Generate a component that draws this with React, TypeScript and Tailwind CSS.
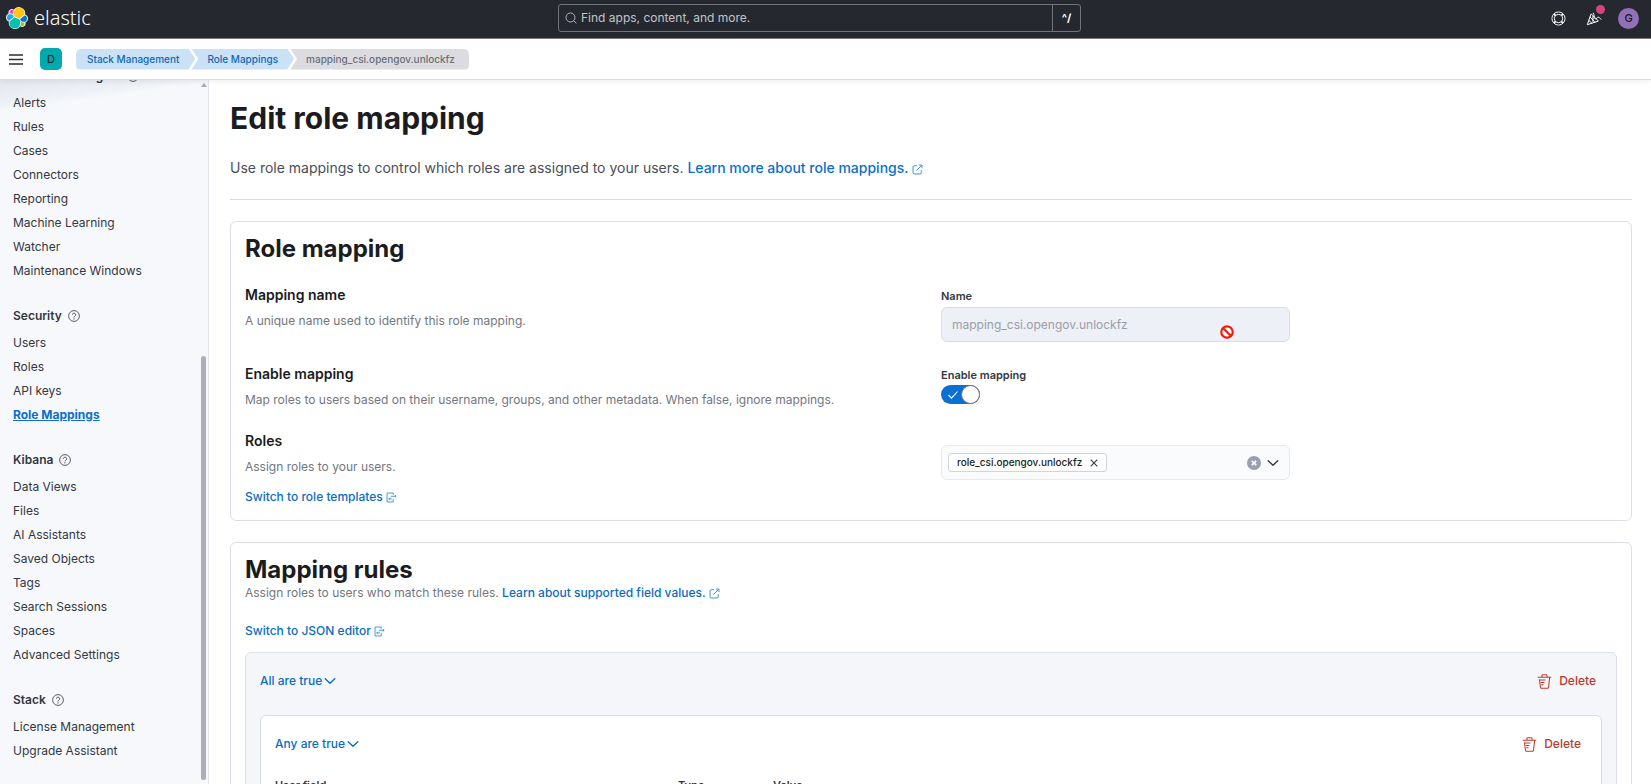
import { useState, type ReactNode } from "react";

const navSections = [
  {
    title: "Alerts and Insights",
    items: ["Alerts", "Rules", "Cases", "Connectors", "Reporting", "Machine Learning", "Watcher", "Maintenance Windows"],
  },
  { title: "Security", items: ["Users", "Roles", "API keys", "Role Mappings"] },
  {
    title: "Kibana",
    items: ["Data Views", "Files", "AI Assistants", "Saved Objects", "Tags", "Search Sessions", "Spaces", "Advanced Settings"],
  },
  { title: "Stack", items: ["License Management", "Upgrade Assistant"] },
];

function ElasticLogo() {
  return (
    <svg viewBox="0 0 32 32" className="size-[22px]" aria-hidden="true">
      <path fill="#fff" d="M32 16.77c0-2.68-1.66-5.03-4.16-5.95A9.2 9.2 0 0 0 11.3 4.05a4.87 4.87 0 0 0-7.5 5.34A6.36 6.36 0 0 0 0 15.3c0 2.7 1.68 5.05 4.19 5.96a9.18 9.18 0 0 0 16.5 6.78 4.87 4.87 0 0 0 7.51-5.35A6.38 6.38 0 0 0 32 16.77" />
      <path fill="#FEC514" d="m12.58 13.79 7 3.2 7.07-6.2a7.9 7.9 0 0 0-14.43-5.96l-1.18 6.1z" />
      <path fill="#00BFB3" d="M5.33 21.22a7.9 7.9 0 0 0 14.46 5.97l1.17-6.09-1.56-2.98-7.03-3.2z" />
      <path fill="#F04E98" d="m5.29 9.08 4.8 1.14 1.05-5.46a3.79 3.79 0 0 0-5.85 4.32" />
      <path fill="#1BA9F5" d="M4.87 10.22a5.3 5.3 0 0 0-.22 9.95l6.73-6.08-1.23-2.64z" />
      <path fill="#93C90E" d="M20.87 27.18a3.78 3.78 0 0 0 5.84-4.31l-4.8-1.12z" />
      <path fill="#07C" d="m21.85 20.62 5.28 1.24a5.3 5.3 0 0 0 .22-9.95l-6.91 6.06z" />
    </svg>
  );
}

function HelpIcon() {
  return (
    <svg viewBox="0 0 16 16" className="size-3" fill="none" stroke="#4a4e59" aria-hidden="true">
      <circle cx="8" cy="8" r="7.2" strokeWidth="1.2" />
      <path strokeWidth="1.3" d="M5.8 6.3a2.2 2.2 0 1 1 3.3 2c-.7.4-1.1.8-1.1 1.6" />
      <circle cx="8" cy="11.9" r=".5" fill="#4a4e59" strokeWidth=".6" />
    </svg>
  );
}

function LifebuoyIcon() {
  return (
    <svg viewBox="0 0 16 16" className="size-[15px]" fill="none" stroke="#fff" strokeWidth="1" aria-hidden="true">
      <circle cx="8" cy="8" r="7" />
      <circle cx="8" cy="8" r="4.4" />
      <path strokeWidth="1.9" d="m3.1 3.1 1.8 1.8M12.9 3.1l-1.8 1.8M3.1 12.9l1.8-1.8M12.9 12.9l-1.8-1.8" />
    </svg>
  );
}

function CheerIcon() {
  return (
    <svg viewBox="0 0 16 16" className="size-4" fill="none" stroke="#fff" strokeWidth="1" strokeLinecap="round" strokeLinejoin="round" aria-hidden="true">
      <path d="M5 4.2 1.3 14.7 12 11.2zM4.1 7l4.8 5.2M2.8 10.4l3.1 2.8M6.9 6.4v5M8 8.6c.3-2 .3-3.4-.7-5.4M10 9.2c.8-1.7 2-2.4 3.2-1.8.9.5 1 1.5 1.7 2" />
    </svg>
  );
}

function PopoutIcon() {
  return (
    <svg viewBox="0 0 16 16" className="inline size-[11px]" fill="none" stroke="#3b8fd9" strokeWidth="1.4" aria-hidden="true">
      <path d="M7 2.5H3.2a1.7 1.7 0 0 0-1.7 1.7v8.6a1.7 1.7 0 0 0 1.7 1.7h8.6a1.7 1.7 0 0 0 1.7-1.7V9M10 1.5h4.5V6M14.3 1.7 6.5 9.5" />
    </svg>
  );
}

function SwapIcon() {
  return (
    <svg viewBox="0 0 16 16" className="size-[11px]" fill="none" stroke="#2a83d3" strokeWidth="1.2" aria-hidden="true">
      <path d="M10.5 4V1.5h-9v13h9V10" />
      <path d="M7 6.2h7.5M12.9 4.4l1.9 1.8-1.9 1.8" />
      <path d="M8.600 10H4M5.800 8.200 4 10l1.800 1.800" />
    </svg>
  );
}

function ChevronIcon() {
  return (
    <svg viewBox="0 0 12 12" className="size-3" fill="none" stroke="currentColor" strokeWidth="1.4" strokeLinecap="round" strokeLinejoin="round" aria-hidden="true">
      <path d="m1.2 3.8 4.8 4.5 4.8-4.5" />
    </svg>
  );
}

function TrashIcon() {
  return (
    <svg viewBox="0 0 16 16" className="size-[15px]" fill="none" stroke="currentColor" strokeWidth="1.1" aria-hidden="true">
      <path d="M.8 3.5h14.4M5.3 3.3V1.6c0-.5.3-.8.8-.8h3.8c.5 0 .8.3.8.8v1.7M2.5 5.6l1.2 8.7c.1.5.4.9 1 .9h6.600c.6 0 .9-.4 1-.9l1.2-10.7M3 6.5h6M4 9h4M4.5 11.5H7" />
    </svg>
  );
}

function DeleteButton() {
  return (
    <button type="button" className="flex h-7 items-center gap-[7px] px-1.5 text-[12px] font-medium text-[#bd3a2b]">
      <TrashIcon />
      Delete
    </button>
  );
}

function GroupHeader({ label }: { label: string }) {
  return (
    <div className="flex items-center justify-between">
      <button type="button" className="flex h-7 items-center gap-0.5 text-[12px] font-medium text-[#0b6cbd]">
        {label}
        <ChevronIcon />
      </button>
      <DeleteButton />
    </div>
  );
}

function SwitchLink({ children }: { children: ReactNode }) {
  return (
    <a href="#switch" className="flex w-fit items-center gap-[3px] text-[12px] leading-[18px] font-medium text-[#0b6cbd]">
      {children}
      <SwapIcon />
    </a>
  );
}

function FormRow({ title, description, extra, children }: { title: string; description: string; extra?: ReactNode; children: ReactNode }) {
  return (
    <div className="grid grid-cols-2 gap-5">
      <div>
        <h3 className="text-[14px] leading-[22px] font-semibold text-[#1a1c21]">{title}</h3>
        <p className="mt-1.5 text-[12px] leading-[18px] text-[#73767f]">{description}</p>
        {extra && <div className="mt-3">{extra}</div>}
      </div>
      <div>{children}</div>
    </div>
  );
}

function Sidebar() {
  return (
    <aside className="flex w-[209px] shrink-0 overflow-hidden border-r border-[#e3e5ea] bg-[#f6f8fc] bg-[linear-gradient(172deg,#e3e7ee_0px,#eef1f6_24px,#f6f8fc_32px)]">
      <nav aria-label="Management" className="-mt-4 flex-1 pl-[13px]">
        {navSections.map((section) => (
          <section key={section.title} className="mb-[21px]">
            <h2 className="mb-[3px] flex h-6 items-center gap-1.5 text-[12px] font-semibold text-[#343741]">
              {section.title}
              <HelpIcon />
            </h2>
            <ul>
              {section.items.map((item) => (
                <li key={item} className="h-6 text-[12px] leading-6">
                  <a
                    href="#nav"
                    className={item === "Role Mappings" ? "font-bold text-[#0b6fc9] underline" : "text-[#343741]"}
                  >
                    {item}
                  </a>
                </li>
              ))}
            </ul>
          </section>
        ))}
      </nav>
      <div className="flex w-2 flex-col items-start pt-[3px] pb-1 pl-px" aria-hidden="true">
        <svg viewBox="0 0 6 4" className="h-1 w-1.5" fill="#a5a8b0">
          <path d="M3 0 6 4H0z" />
        </svg>
        <div className="flex-[269]" />
        <div className="w-[5px] flex-[424] rounded-full bg-[#acaeb9]" />
      </div>
    </aside>
  );
}

function Header() {
  return (
    <header className="shrink-0">
      <div className="grid h-[39px] grid-cols-[1fr_auto_1fr] items-center border-b border-[#7d7880] bg-[#25282f] pr-3 pb-0.5">
        <a href="#home" className="flex items-center gap-1.5 pl-1.5">
          <ElasticLogo />
          <span className="font-['Noto_Sans'] text-[20px] leading-6 font-light text-white">elastic</span>
        </a>
        <div className="flex h-7 w-[523px] items-center rounded-[3px] border border-[#70737a]">
          <svg viewBox="0 0 16 16" className="ml-1.5 size-3" fill="none" stroke="#b4b7bd" strokeWidth="1.3" aria-hidden="true">
            <circle cx="7.3" cy="7.3" r="6" />
            <path d="m11.6 11.6 3.6 3.6" />
          </svg>
          <input
            type="search"
            aria-label="Find apps, content, and more."
            placeholder="Find apps, content, and more."
            className="min-w-0 flex-1 bg-transparent px-1 text-[12px] text-white outline-none placeholder:text-[#c2c4ca]"
          />
          <kbd className="flex h-full w-7 items-center justify-center border-l border-[#70737a] font-['Inter'] text-[11px] font-bold text-white">^/</kbd>
        </div>
        <div className="flex items-center justify-end">
          <button type="button" aria-label="Help" className="mr-5">
            <LifebuoyIcon />
          </button>
          <button type="button" aria-label="What's new" className="relative mr-4">
            <CheerIcon />
            <span className="absolute -top-[5px] -right-[3px] size-[9px] rounded-full bg-[#d6447c]" />
          </button>
          <button type="button" aria-label="Account" className="flex size-[21px] items-center justify-center rounded-full bg-[#9170b8] text-[11px] font-medium text-[#15161a]">
            G
          </button>
        </div>
      </div>
      <div className="relative flex h-[41px] items-center border-b border-[#d9dce3] bg-white pl-[9px] shadow-[0_2px_5px_rgba(0,0,0,0.06)]">
        <button type="button" aria-label="Toggle navigation">
          <svg viewBox="0 0 14 11" className="h-[11px] w-3.5" stroke="#2b2e36" strokeWidth="1.6" aria-hidden="true">
            <path d="M0 1h14M0 5.5h14M0 10h14" />
          </svg>
        </button>
        <button type="button" aria-label="Default space" className="ml-[17px] flex size-[22px] items-center justify-center rounded-[5px] bg-[#00a9ae] text-[11px] font-medium text-[#10282c]">
          D
        </button>
        <nav aria-label="Breadcrumb" className="ml-3.5">
          <ol className="flex h-[21px] text-[10px] leading-[21px] font-medium">
            <li className="rounded-l-[5px] bg-[#cbe1f5] pr-4 pl-[11px] text-[#0f69b4] [clip-path:polygon(0_0,calc(100%-7px)_0,100%_50%,calc(100%-7px)_100%,0_100%)]">
              <a href="#stack">Stack Management</a>
            </li>
            <li className="-ml-1 bg-[#cbe1f5] pr-4 pl-4 text-[#0f69b4] [clip-path:polygon(0_0,calc(100%-7px)_0,100%_50%,calc(100%-7px)_100%,0_100%,7px_50%)]">
              <a href="#mappings">Role Mappings</a>
            </li>
            <li className="-ml-1 rounded-r-[5px] bg-[#dcdce0] pr-3.5 pl-4 text-[#6b6e78] [clip-path:polygon(0_0,100%_0,100%_100%,0_100%,7px_50%)]">
              mapping_csi.opengov.unlockfz
            </li>
          </ol>
        </nav>
      </div>
    </header>
  );
}

function NoEntryCursor() {
  return (
    <svg viewBox="0 0 14 14" className="absolute top-[18px] right-14 size-3.5" fill="#fff" stroke="#ee1c0c" strokeWidth="2.2" aria-hidden="true">
      <circle cx="7" cy="7" r="5.7" />
      <path d="m3 3 8 8" />
    </svg>
  );
}

export default function App() {
  const [enabled, setEnabled] = useState(true);

  return (
    <div className="flex h-screen flex-col overflow-hidden bg-white font-['Inter',sans-serif] text-[#343741]">
      <Header />
      <div className="flex min-h-0 flex-1">
        <Sidebar />
        <main className="min-w-0 flex-1 overflow-hidden pt-5 pr-[19px] pl-[21px]">
          <h1 className="text-[30px] leading-9 font-bold text-[#1a1c21]">Edit role mapping</h1>
          <p className="mt-5 text-[14px] leading-6 text-[#4a4d57]">
            Use role mappings to control which roles are assigned to your users.{" "}
            <a href="#learn" className="font-medium text-[#0b6fc9]">
              Learn more about role mappings. <PopoutIcon />
            </a>
          </p>
          <hr className="mt-[19px] border-[#d8dae0]" />

          <section className="mt-[21px] rounded-md border border-[#dcdfe5] p-3.5">
            <h2 className="text-[24px] leading-[26px] font-bold text-[#1a1c21]">Role mapping</h2>
            <div className="mt-[22px] flex flex-col gap-[21px]">
              <FormRow title="Mapping name" description="A unique name used to identify this role mapping.">
                <label htmlFor="mapping-name" className="mt-[3px] block text-[11px] leading-[18px] font-semibold text-[#343741]">
                  Name
                </label>
                <div className="relative mt-0.5 w-[349px]">
                  <input
                    id="mapping-name"
                    disabled
                    defaultValue="mapping_csi.opengov.unlockfz"
                    className="h-[35px] w-full rounded-md border border-[#dadde5] bg-[#edf0f6] px-2.5 text-[12px] text-[#9b9ea8]"
                  />
                  <NoEntryCursor />
                </div>
              </FormRow>
              <FormRow
                title="Enable mapping"
                description="Map roles to users based on their username, groups, and other metadata. When false, ignore mappings."
              >
                <label className="mt-[3px] block w-fit text-[11px] leading-[18px] font-semibold text-[#343741]">
                  Enable mapping
                  <input
                    type="checkbox"
                    role="switch"
                    checked={enabled}
                    onChange={(event) => setEnabled(event.target.checked)}
                    className="peer sr-only"
                  />
                  <span className="mt-px flex h-[19px] w-[39px] items-center justify-between rounded-full bg-[#9a9da8] peer-checked:bg-[#0b70d6]">
                    <svg viewBox="0 0 12 10" className="ml-1.5 h-2.5 w-3" fill="none" stroke="#fff" strokeWidth="1.1" aria-hidden="true">
                      <path d="m1.5 5 3 3.2 6-6.7" />
                    </svg>
                    <span className="size-[19px] rounded-full border border-[#6f7684] bg-white" />
                  </span>
                </label>
              </FormRow>
              <FormRow
                title="Roles"
                description="Assign roles to your users."
                extra={<SwitchLink>Switch to role templates</SwitchLink>}
              >
                <div className="mt-[15px] flex h-[35px] w-[349px] items-center rounded-md border border-[#e6e9ee] bg-[#fafbfd] px-1.5">
                  <span className="flex h-[19px] items-center gap-2 rounded-[3px] border border-[#d0d4dc] bg-white px-2 text-[10px] font-medium text-[#1a1c21]">
                    role_csi.opengov.unlockfz
                    <button type="button" aria-label="Remove role_csi.opengov.unlockfz">
                      <svg viewBox="0 0 8 8" className="size-2" stroke="#343741" strokeWidth="1.1" aria-hidden="true">
                        <path d="m.7.7 6.6 6.6M7.3.7.7 7.3" />
                      </svg>
                    </button>
                  </span>
                  <button type="button" aria-label="Clear roles" className="ml-auto">
                    <svg viewBox="0 0 14 14" className="size-3.5" aria-hidden="true">
                      <circle cx="7" cy="7" r="7" fill="#98a0b0" />
                      <path d="m4.8 4.8 4.4 4.4M9.2 4.8 4.8 9.2" stroke="#fff" strokeWidth="1.7" />
                    </svg>
                  </button>
                  <button type="button" aria-label="Show roles" className="mr-1 ml-1.5 text-[#343741]">
                    <ChevronIcon />
                  </button>
                </div>
              </FormRow>
            </div>
          </section>

          <section className="mt-[21px] rounded-md border border-[#dcdfe5] p-3.5">
            <h2 className="text-[24px] leading-[26px] font-bold text-[#1a1c21]">Mapping rules</h2>
            <p className="mt-px text-[12px] leading-[18px] text-[#73767f]">
              Assign roles to users who match these rules.{" "}
              <a href="#fields" className="font-medium text-[#0b6cbd]">
                Learn about supported field values. <PopoutIcon />
              </a>
            </p>
            <div className="mt-5 mb-3">
              <SwitchLink>Switch to JSON editor</SwitchLink>
            </div>
            <div className="rounded-md border border-[#dcdfe5] bg-[#f5f6fa] p-3.5">
              <GroupHeader label="All are true" />
              <div className="mt-5 rounded-md border border-[#d8dbe6] bg-white p-3.5">
                <GroupHeader label="Any are true" />
                <div className="mt-[18px] flex text-[11px] leading-[18px] font-semibold text-[#343741]">
                  <span className="w-[403px]">User field</span>
                  <span className="w-[95px]">Type</span>
                  <span>Value</span>
                </div>
              </div>
            </div>
          </section>
        </main>
      </div>
    </div>
  );
}
